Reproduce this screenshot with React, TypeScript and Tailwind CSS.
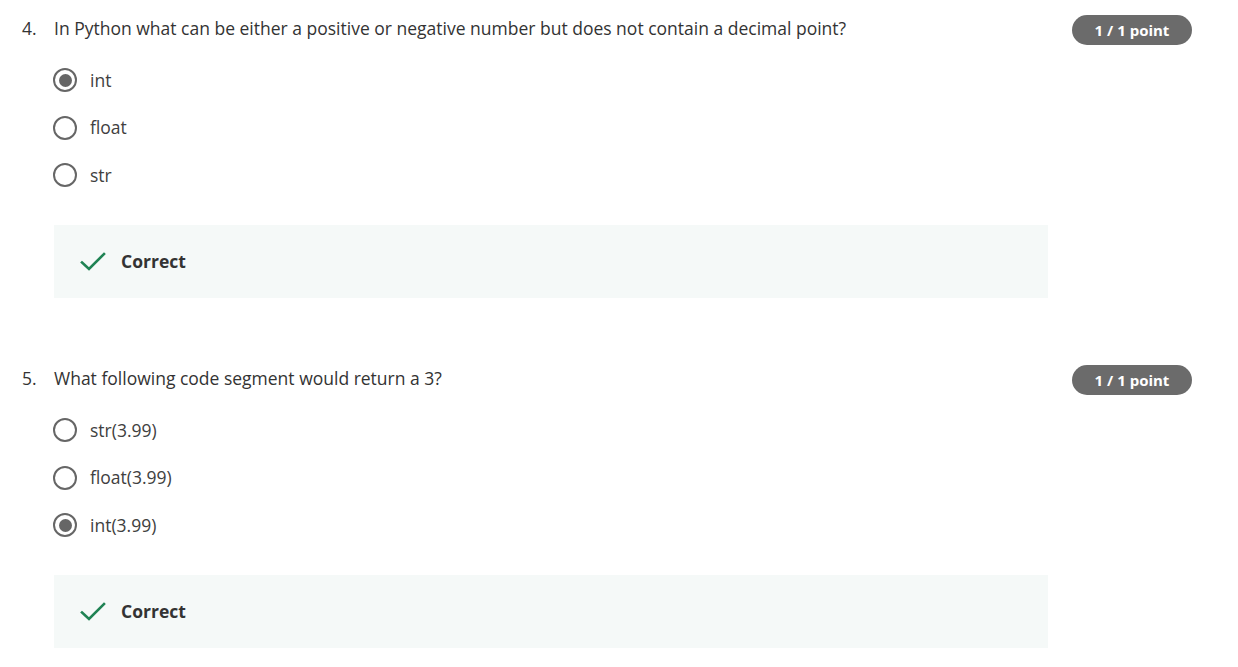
const questions = [
  {
    num: "4.",
    text: "In Python what can be either a positive or negative number but does not contain a decimal point?",
    options: ["int", "float", "str"],
    selected: 0,
  },
  {
    num: "5.",
    text: "What following code segment would return a 3?",
    options: ["str(3.99)", "float(3.99)", "int(3.99)"],
    selected: 2,
  },
];

function Radio({ checked }: { checked: boolean }) {
  return (
    <span className="flex h-6 w-6 shrink-0 items-center justify-center rounded-full border-[2.5px] border-[#666666]">
      {checked && <span className="h-[13px] w-[13px] rounded-full bg-[#666666]" />}
    </span>
  );
}

function CheckIcon() {
  return (
    <svg width="26" height="20" viewBox="0 0 26 20" fill="none">
      <path d="M2 10.5 L9 17 L24 2" stroke="#1f8354" strokeWidth="2.6" strokeLinecap="square" />
    </svg>
  );
}

export default function App() {
  return (
    <div className="min-h-screen bg-white font-['Open_Sans',sans-serif] text-[#333333]">
      <div className="flex flex-col gap-[65px] pt-[13px]">
        {questions.map((q) => (
          <section key={q.num} className="flex items-start">
            <div className="w-[1048px] shrink-0">
              <div className="flex h-[30px] items-center text-[17.5px]">
                <span className="w-[54px] pl-[22px]">{q.num}</span>
                <span>{q.text}</span>
              </div>
              <div className="mt-[25px] flex flex-col gap-[23.5px] pl-[53px]">
                {q.options.map((opt, i) => (
                  <label key={opt} className="flex h-6 items-center gap-[13px] text-[17.5px] text-[#404040]">
                    <Radio checked={i === q.selected} />
                    <span>{opt}</span>
                  </label>
                ))}
              </div>
              <div className="ml-[54px] mt-[38px] flex h-[73px] items-center gap-[15px] bg-[#f5f9f8] pl-[26px]">
                <CheckIcon />
                <span className="text-[17.5px] font-bold text-[#333333]">Correct</span>
              </div>
            </div>
            <span className="ml-[24px] mt-[2px] flex h-[30px] w-[120px] items-center justify-center rounded-full bg-[#6b6b6b] text-[15px] font-bold text-white">
              1 / 1 point
            </span>
          </section>
        ))}
      </div>
    </div>
  );
}
